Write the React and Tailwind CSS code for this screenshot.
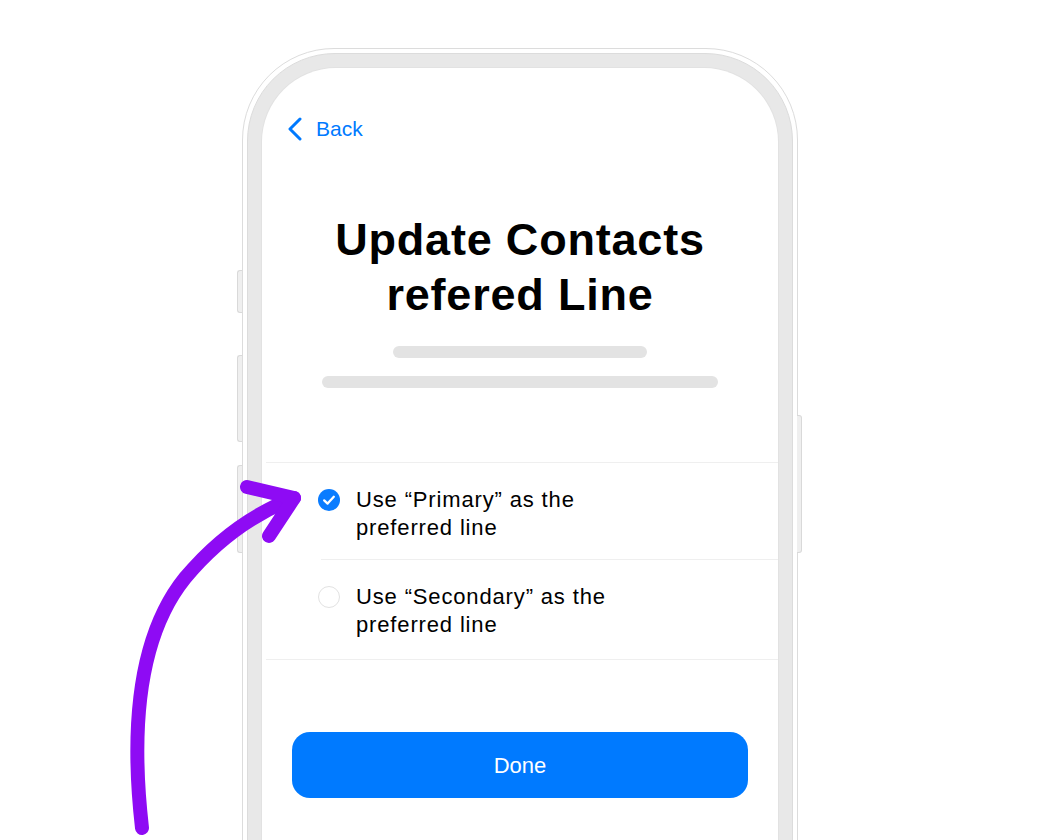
import React from "react";

const font = { fontFamily: '"Liberation Sans", Arial, Helvetica, sans-serif' };

function Chevron() {
  return (
    <svg width="16" height="24" viewBox="0 0 16 24" fill="none">
      <path d="M13 2 L3 12 L13 22" stroke="#007AFF" strokeWidth="3" strokeLinecap="round" strokeLinejoin="round" />
    </svg>
  );
}

function Radio({ checked }) {
  if (checked) {
    return (
      <span className="mt-[3px] flex h-[22px] w-[22px] shrink-0 items-center justify-center rounded-full bg-[#0A7CFF]">
        <svg width="22" height="22" viewBox="0 0 22 22" fill="none">
          <path d="M6.2 11.4 L9.6 14.6 L15.8 7.8" stroke="white" strokeWidth="2.3" strokeLinecap="round" strokeLinejoin="round" />
        </svg>
      </span>
    );
  }
  return <span className="mt-[3px] block h-[22px] w-[22px] shrink-0 rounded-full border border-[#e2e2e2] bg-white" />;
}

function Option({ checked, label, className }) {
  return (
    <div className={"flex items-start gap-[16px] pl-[56px] " + className}>
      <Radio checked={checked} />
      <p className="text-[22px] leading-[28px] tracking-[0.85px] text-black">
        Use “{label}” as the
        <br />
        preferred line
      </p>
    </div>
  );
}

export default function App() {
  return (
    <div className="relative h-[840px] w-[1040px] overflow-hidden bg-white pl-[242px] pt-[48px]" style={font}>
      {/* handset */}
      <div className="relative h-[900px] w-[556px] rounded-[92px] border border-[#dcdcdc] bg-white p-[4px]">
        {/* side keys */}
        <div className="absolute left-[-6px] top-[221px] h-[43px] w-[5px] rounded-l-[3px] border border-r-0 border-[#d9d9d9] bg-[#efefef]" />
        <div className="absolute left-[-6px] top-[306px] h-[87px] w-[5px] rounded-l-[3px] border border-r-0 border-[#d9d9d9] bg-[#efefef]" />
        <div className="absolute left-[-6px] top-[416px] h-[88px] w-[5px] rounded-l-[3px] border border-r-0 border-[#d9d9d9] bg-[#efefef]" />
        <div className="absolute right-[-5px] top-[366px] h-[138px] w-[5px] rounded-r-[3px] border border-l-0 border-[#d9d9d9] bg-[#efefef]" />

        <div className="h-full rounded-[88px] border border-[#dcdcdc] bg-[#e8e8e8] p-[14px]">
          <div className="flex h-full flex-col rounded-[74px] bg-white shadow-[0_0_0_1px_#e2e2e2]">
            {/* nav */}
            <div className="ml-[25px] mt-[49px] flex items-center gap-[13px] text-[21px] leading-[24px] text-[#007AFF]">
              <Chevron />
              <span>Back</span>
            </div>

            {/* heading */}
            <h1 className="mt-[71px] text-center text-[45px] font-bold leading-[55px] tracking-[0.8px] text-black">
              Update Contacts
              <br />
              refered Line
            </h1>

            <div className="mt-[24px] h-[12px] w-[254px] self-center rounded-full bg-[#e3e3e3]" />
            <div className="mt-[18px] h-[12px] w-[396px] self-center rounded-full bg-[#e3e3e3]" />

            {/* options */}
            <div className="mt-[74px] ml-[4px] h-px bg-[#efefef]" />
            <Option checked label="Primary" className="pt-[23px] pb-[17px]" />
            <div className="ml-[59px] h-px bg-[#efefef]" />
            <Option label="Secondary" className="pt-[23px] pb-[20px]" />
            <div className="ml-[4px] h-px bg-[#efefef]" />

            <button className="mx-[30px] mt-[72px] h-[66px] rounded-[18px] bg-[#007AFF] text-[22px] font-medium text-white">
              Done
            </button>
          </div>
        </div>
      </div>

      {/* hand-drawn pointer */}
      <svg className="pointer-events-none absolute left-0 top-0" width="1040" height="840" viewBox="0 0 1040 840" fill="none">
        <path
          d="M142 828 C 132 740, 135 640, 185 578 C 215 542, 250 515, 294 498"
          stroke="#8E0BF4"
          strokeWidth="14"
          strokeLinecap="round"
          strokeLinejoin="round"
        />
        <path
          d="M247 487 L 294 498 L 269 536"
          stroke="#8E0BF4"
          strokeWidth="14"
          strokeLinecap="round"
          strokeLinejoin="round"
        />
      </svg>
    </div>
  );
}
